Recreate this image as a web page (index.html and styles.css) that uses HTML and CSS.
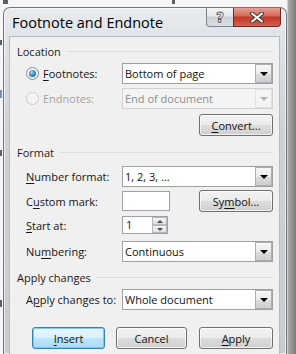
FILE: index.html
```html
<!DOCTYPE html>
<html>
<head>
<meta charset="utf-8">
<link rel="stylesheet" href="styles.css">
</head>
<body>
<div class="screen">
  <div class="bgmarks">
    <span class="mk m1"></span><span class="mk m2"></span><span class="mk m3"></span><span class="mk m4"></span><span class="mk m5"></span><span class="mk m6"></span>
  </div>
  <div class="window">
    <div class="titlebar">
      <span class="title">Footnote and Endnote</span>
      <div class="caption">
        <div class="cbtn help">?</div>
        <div class="cbtn close">
          <svg width="14" height="11" viewBox="0 0 14 11"><path d="M2 1.5 L12 9.5 M12 1.5 L2 9.5" stroke="#3b3b3b" stroke-width="4" stroke-linecap="round"/><path d="M2 1.5 L12 9.5 M12 1.5 L2 9.5" stroke="#fff" stroke-width="2" stroke-linecap="round"/></svg>
        </div>
      </div>
    </div>
    <div class="client">
      <div class="group-head">Location</div>

      <div class="row radio-row r-foot">
        <div class="radio-label"><span class="radio checked"></span><span><u>F</u>ootnotes:</span></div>
        <div class="combo"><span class="combo-text">Bottom of page</span><span class="combo-btn"><span class="tri"></span></span></div>
      </div>

      <div class="row radio-row r-end disabled">
        <div class="radio-label"><span class="radio"></span><span>Endnotes:</span></div>
        <div class="combo dis"><span class="combo-text">End of document</span><span class="combo-btn"><span class="tri"></span></span></div>
      </div>

      <div class="row btn-row r-convert">
        <div class="btn"><span><u>C</u>onvert...</span></div>
      </div>

      <div class="group-head g-format">Format</div>

      <div class="row r-numfmt">
        <div class="label"><u>N</u>umber format:</div>
        <div class="combo"><span class="combo-text">1, 2, 3, …</span><span class="combo-btn"><span class="tri"></span></span></div>
      </div>

      <div class="row r-custom">
        <div class="label">C<u>u</u>stom mark:</div>
        <div class="textbox"></div>
        <div class="btn sym">Sy<u>m</u>bol...</div>
      </div>

      <div class="row r-start">
        <div class="label"><u>S</u>tart at:</div>
        <div class="spinner"><span class="spin-text">1</span><span class="spin-btns"><span class="sb up"><span class="tri-up"></span></span><span class="sb down"><span class="tri-dn"></span></span></span></div>
      </div>

      <div class="row r-numbering">
        <div class="label">Nu<u>m</u>bering:</div>
        <div class="combo"><span class="combo-text">Continuous</span><span class="combo-btn"><span class="tri"></span></span></div>
      </div>

      <div class="group-head g-apply">Apply changes</div>

      <div class="row r-applyto">
        <div class="label">A<u>p</u>ply changes to:</div>
        <div class="combo"><span class="combo-text">Whole document</span><span class="combo-btn"><span class="tri"></span></span></div>
      </div>

      <div class="buttons">
        <div class="btn default w-insert"><u>I</u>nsert</div>
        <div class="btn w-cancel">Cancel</div>
        <div class="btn w-apply"><u>A</u>pply</div>
      </div>
    </div>
  </div>
</div>
</body>
</html>
```

FILE: styles.css
```css
* { box-sizing: border-box; }
html, body { margin: 0; padding: 0; }
body {
  width: 296px;
  height: 354px;
  overflow: hidden;
  font-family: "Open Sans", "Noto Sans", sans-serif;
  font-size: 11px;
  color: #151515;
  background: linear-gradient(to right, #f6f6f6 0, #f6f6f6 287px, #a9a9a9 288px, #7a7a7a 296px);
}
.screen {
  position: relative;
  width: 296px;
  height: 354px;
  padding: 7px 0 0 3px;
}
.bgmarks {
  position: absolute;
  inset: 0;
}
.mk {
  position: absolute;
  background: #3a3a3a;
  filter: blur(0.5px);
  opacity: 0.8;
}
.m1 { left: 3px; top: 0; width: 5px; height: 4px; }
.m2 { left: 172px; top: 0; width: 3px; height: 4px; }
.m3 { left: 0; top: 40px; width: 2px; height: 5px; }
.m4 { left: 0; top: 90px; width: 2px; height: 8px; background: #5577aa; }
.m5 { left: 0; top: 150px; width: 2px; height: 6px; }
.m6 { left: 0; top: 300px; width: 2px; height: 7px; }

.window {
  position: relative;
  width: 284px;
  height: 347px;
  border: 1px solid #6f767c;
  border-bottom: none;
  border-radius: 7px 7px 0 0;
  background: linear-gradient(180deg, #e9ecef 0, #dfe3e7 30px, #cdd2d7 120px, #c7ccd1 347px);
  padding: 0 7px 0 6px;
  display: flex;
  flex-direction: column;
  box-shadow: inset 0 0 0 1px rgba(255,255,255,0.6);
}
.titlebar {
  height: 29px;
  display: flex;
  justify-content: space-between;
  align-items: flex-start;
}
.title {
  margin-left: 2px;
  padding-top: 6px;
  line-height: 18px;
  font-size: 14.5px;
  color: #000;
}
.caption {
  display: flex;
  margin-right: -2px;
}
.cbtn {
  height: 19px;
  display: flex;
  align-items: center;
  justify-content: center;
}
.help {
  width: 27px;
  border: 1px solid #7d858c;
  border-top: none;
  border-right: none;
  border-radius: 0 0 0 4px;
  background: linear-gradient(#f3f5f7 0, #e4e8ec 45%, #ccd2d8 50%, #d9dee3 100%);
  font-family: "DejaVu Sans", sans-serif;
  font-size: 14px;
  font-weight: bold;
  color: #fff;
  -webkit-text-stroke: 0.8px #555;
}
.close {
  width: 48px;
  border: 1px solid #6d2a25;
  border-top: none;
  border-radius: 0 0 4px 0;
  background: linear-gradient(#e8a093 0, #d46a5a 45%, #c2372a 50%, #d2604c 100%);
}

.client {
  flex: 1;
  background: #f0f0f0;
  box-shadow: 0 0 0 1px #b5bcc3;
  padding-top: 7px;
  display: flex;
  flex-direction: column;
}
.group-head {
  display: flex;
  align-items: center;
  height: 15px;
  padding-left: 7px;
  padding-right: 6px;
  color: #1a1a1a;
}
.group-head::after {
  content: "";
  flex: 1;
  height: 1px;
  margin-left: 5px;
  background: #dcdfe2;
}
.g-format { margin-top: 9px; }
.g-apply { margin-top: 8px; }

.row {
  display: flex;
  align-items: center;
  padding-left: 16px;
  padding-right: 6px;
}
.label { width: 96px; }
.radio-row { padding-left: 16px; }
.radio-label {
  width: 96px;
  display: flex;
  align-items: center;
  gap: 4px;
}
.radio {
  width: 13px;
  height: 13px;
  border-radius: 50%;
  border: 1px solid #8a8d90;
  background: radial-gradient(circle at 50% 40%, #ffffff 0, #f2f2f2 50%, #d8d8d8 100%);
  display: flex;
  align-items: center;
  justify-content: center;
}
.radio.checked::after {
  content: "";
  width: 7px;
  height: 7px;
  border-radius: 50%;
  background: radial-gradient(circle at 40% 35%, #a6e1f4 0, #3b91b5 45%, #135c7b 100%);
}
.disabled { color: #a3a3a3; }
.disabled .radio {
  border-color: #cacaca;
  background: #f4f4f4;
}

.r-foot { margin-top: 4px; }
.r-end { margin-top: 4px; }
.r-convert { margin-top: 5px; justify-content: flex-end; }
.r-numfmt { margin-top: 6px; }
.r-custom { margin-top: 3px; }
.r-start { margin-top: 4px; }
.r-numbering { margin-top: 7px; }
.r-applyto { margin-top: 4px; }

.combo {
  width: 151px;
  height: 21px;
  background: #fff;
  border: 1px solid #9da1a6;
  display: flex;
  align-items: center;
  justify-content: space-between;
  color: #111;
}
.combo-text { padding-left: 2px; }
.combo-btn {
  width: 17px;
  height: 19px;
  border: 1px solid #a9aeb3;
  background: linear-gradient(#f7f7f7 0, #ececec 50%, #dcdcdc 51%, #cfcfcf 100%);
  display: flex;
  align-items: center;
  justify-content: center;
}
.tri {
  width: 0;
  height: 0;
  border-left: 4px solid transparent;
  border-right: 4px solid transparent;
  border-top: 4px solid #000;
  margin-top: 1px;
}
.combo.dis {
  background: #f4f4f4;
  border-color: #d2d2d2;
  color: #8d8d8d;
}
.combo.dis .combo-btn {
  background: #f4f4f4;
  border-color: #e0e0e0;
}
.combo.dis .tri { border-top-color: #b2b2b2; }

.btn {
  width: 74px;
  height: 22px;
  border: 1px solid #707070;
  border-radius: 3px;
  background: linear-gradient(#f2f2f2 0, #ebebeb 50%, #dddddd 51%, #cfcfcf 100%);
  box-shadow: inset 0 0 0 1px rgba(255,255,255,0.7);
  display: flex;
  align-items: center;
  justify-content: center;
  color: #111;
}
.sym { margin-left: auto; }
.textbox {
  width: 48px;
  height: 20px;
  background: #fff;
  border: 1px solid #9da1a6;
}
.spinner {
  width: 46px;
  height: 18px;
  background: #fff;
  border: 1px solid #9da1a6;
  display: flex;
  justify-content: space-between;
}
.spin-text { padding-left: 3px; line-height: 16px; }
.spin-btns {
  width: 15px;
  display: flex;
  flex-direction: column;
}
.sb {
  flex: 1;
  border: 1px solid #b5b9bd;
  background: linear-gradient(#f6f6f6, #dedede);
  display: flex;
  align-items: center;
  justify-content: center;
}
.tri-up {
  border-left: 3px solid transparent;
  border-right: 3px solid transparent;
  border-bottom: 3px solid #4a4a4a;
}
.tri-dn {
  border-left: 3px solid transparent;
  border-right: 3px solid transparent;
  border-top: 3px solid #4a4a4a;
}

.buttons {
  display: flex;
  margin-top: 17px;
  padding-left: 22px;
}
.w-insert { width: 73px; }
.w-cancel { width: 71px; margin-left: 11px; }
.w-apply { width: 74px; margin-left: 12px; }
.btn.default {
  border-color: #3c7fb1;
  background: linear-gradient(#eaf6fd 0, #d9f0fc 50%, #bee6fd 51%, #a7d9f5 100%);
  box-shadow: inset 0 0 0 1px #86c7ea;
}
u { text-decoration-thickness: 1px; text-underline-offset: 2px; }
```
